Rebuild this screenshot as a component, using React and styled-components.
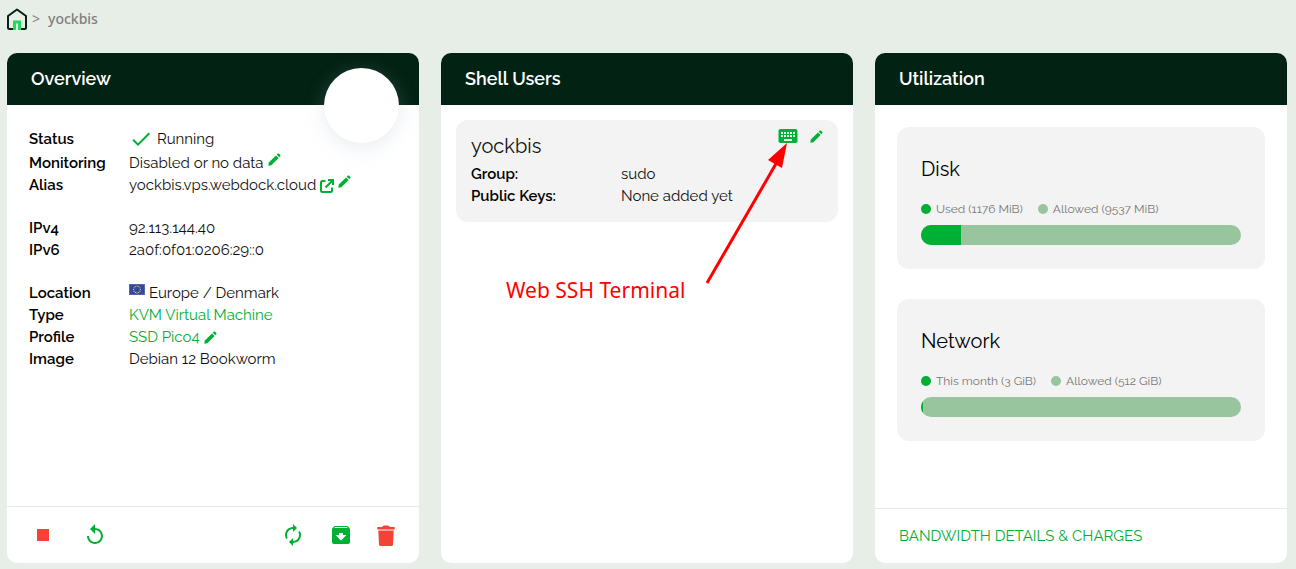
import React from "react";
import styled, { createGlobalStyle } from "styled-components";
import { MdArchive, MdAutorenew, MdCheck, MdReplay, MdStop } from "react-icons/md";

const GREEN = "#00b035";
const RED = "#f44336";

const GlobalStyle = createGlobalStyle`
  * { box-sizing: border-box; }
  body {
    margin: 0;
    background: #e7eee7;
    color: #111;
    font-family: Raleway, Lato, "Open Sans", sans-serif;
    font-size: 15px;
    line-height: 22px;
  }
`;

const Page = styled.div`
  min-height: 100vh;
  display: flex;
  flex-direction: column;
  padding: 8px 9px 6px 7px;
`;

const Breadcrumb = styled.nav`
  display: flex;
  align-items: center;
  height: 22px;
  margin-bottom: 23px;
  color: #808080;
  font-family: "Noto Sans", sans-serif;
  font-size: 14px;
  font-weight: 500;
`;

const HomeLink = styled.a`
  display: flex;
`;

const Separator = styled.span`
  margin: 0 8px 0 4px;
  font-weight: 400;
`;

const Columns = styled.main`
  flex: 1;
  display: grid;
  grid-template-columns: repeat(3, minmax(0, 1fr));
  gap: 22px;
`;

const Card = styled.section`
  position: relative;
  display: flex;
  flex-direction: column;
  background: #fff;
  border-radius: 10px;
`;

const CardHeader = styled.header`
  padding: 15px 24px;
  background: #022213;
  border-radius: 10px 10px 0 0;
`;

const CardTitle = styled.h2`
  margin: 0;
  color: #fff;
  font-size: 18px;
  font-weight: 600;
  line-height: 22px;
`;

const Avatar = styled.div`
  position: absolute;
  top: 15px;
  right: 20px;
  width: 75px;
  height: 75px;
  border-radius: 50%;
  background: #fff;
  box-shadow: 0 4px 20px rgba(160, 180, 205, 0.25);
`;

const CardBody = styled.div`
  flex: 1;
  padding: ${(p) => p.$padding};
`;

const CardFooter = styled.footer`
  display: flex;
  align-items: center;
  height: ${(p) => p.$height};
  padding: 0 24px;
  border-top: 1px solid #e8e8e8;
`;

const Details = styled.dl`
  margin: 0 0 21px;
`;

const DetailRow = styled.div`
  display: grid;
  grid-template-columns: ${(p) => p.$label || "100px"} 1fr;
  align-items: center;
  height: ${(p) => (p.$tall ? "27px" : "22px")};
`;

const Label = styled.dt`
  color: #000;
  font-weight: 600;
`;

const Value = styled.dd`
  display: flex;
  align-items: center;
  gap: 4px;
  margin: 0;
`;

const TextLink = styled.a`
  color: ${GREEN};
  text-decoration: none;
`;

const IconButton = styled.button`
  display: flex;
  margin: 0;
  padding: 0;
  border: 0;
  background: none;
  color: ${(p) => (p.$danger ? RED : GREEN)};
  font-size: 24px;
  cursor: pointer;
`;

const EditButton = styled(IconButton)`
  padding-bottom: ${(p) => (p.$raised ? "8px" : "0")};
`;

const IconLink = styled.a`
  display: flex;
  color: ${GREEN};
`;

const CheckIcon = styled(MdCheck)`
  color: ${GREEN};
  font-size: 24px;
`;

const ActionGroup = styled.div`
  display: flex;
  gap: ${(p) => p.$gap};
  margin-left: ${(p) => (p.$end ? "auto" : "0")};
`;

const UserCard = styled.article`
  padding: 15px;
  border-radius: 12px;
  background: #f3f3f3;
`;

const UserHeader = styled.div`
  display: flex;
  justify-content: space-between;
  align-items: flex-start;
  height: 28px;
`;

const UserName = styled.h3`
  margin: 0;
  font-size: 20px;
  font-weight: 400;
`;

const UserActions = styled.div`
  display: flex;
  align-items: center;
  gap: 12px;
  margin-top: -6px;
`;

const UserDetails = styled.dl`
  margin: 0;
`;

const AnnotationText = styled.p`
  position: absolute;
  top: 223px;
  left: 65px;
  margin: 0;
  color: #f00;
  font-family: "Noto Sans", sans-serif;
  font-size: 21px;
  line-height: 28px;
`;

const AnnotationArrow = styled.svg`
  position: absolute;
  top: 87px;
  right: 60px;
  pointer-events: none;
`;

const Meter = styled.section`
  padding: 24px;
  border-radius: 12px;
  background: #f3f3f3;

  & + & {
    margin-top: 30px;
  }
`;

const MeterTitle = styled.h3`
  margin: 0 0 12px;
  color: #000;
  font-size: 20px;
  font-weight: 400;
  line-height: 36px;
`;

const Legend = styled.div`
  display: flex;
  gap: 15px;
  margin-bottom: 6px;
  color: #777;
  font-size: 12px;
  line-height: 20px;
`;

const LegendItem = styled.span`
  display: flex;
  align-items: center;
  gap: 5px;

  &::before {
    content: "";
    width: 10px;
    height: 10px;
    border-radius: 50%;
    background: ${(p) => (p.$used ? GREEN : "#98c49e")};
  }
`;

const Bar = styled.div`
  height: 20px;
  overflow: hidden;
  border-radius: 10px;
  background: #98c49e;
`;

const BarFill = styled.div`
  height: 100%;
  background: ${GREEN};
`;

function HomeIcon() {
  return (
    <svg width="21" height="22" viewBox="0 0 21 22" fill="none" aria-hidden="true">
      <path
        d="M7 21H2.5Q1 21 1 19.500V8L10 1.500L19 8V19.500Q19 21 17.500 21H13"
        stroke="#022213"
        strokeWidth="2"
        strokeLinejoin="round"
      />
      <path d="M7.500 22V14H12.500V22" stroke="#1fdb57" strokeWidth="3" />
    </svg>
  );
}

function EuFlag() {
  const stars = Array.from({ length: 12 }, (_, i) => {
    const angle = (i * Math.PI) / 6;
    return [8 + 3.4 * Math.sin(angle), 5.5 - 3.4 * Math.cos(angle)];
  });
  return (
    <svg width="16" height="18" viewBox="0 0 16 18" role="img" aria-label="European Union">
      <rect width="16" height="11" fill="#35469c" />
      <rect x="0.5" y="0.5" width="15" height="10" fill="none" stroke="#5965ad" />
      {stars.map(([x, y]) => (
        <circle key={`${x}-${y}`} cx={x} cy={y} r="0.6" fill="#e4d75c" />
      ))}
    </svg>
  );
}

function PencilIcon() {
  return (
    <svg width="13" height="13" viewBox="0 0 13 13" fill="currentColor" aria-hidden="true">
      <path d="M0.300 12.700L0.800 9.600L8 2.400L10.600 5L3.400 12.200Z" />
      <path d="M8.700 1.700L9.900 0.600Q10.400 0.200 10.900 0.600L12.400 2.100Q12.800 2.600 12.400 3.100L11.300 4.300Z" />
    </svg>
  );
}

function OpenIcon() {
  return (
    <svg
      width="14"
      height="18"
      viewBox="0 0 14 18"
      fill="none"
      stroke="currentColor"
      strokeWidth="2"
      aria-hidden="true"
    >
      <path d="M5.500 5H2.500Q1 5 1 6.500V14.500Q1 16 2.500 16H10.500Q12 16 12 14.500V11.500" />
      <path d="M8 4H13V9M13 4L5.500 11.500" />
    </svg>
  );
}

function KeyboardIcon() {
  const columns = [3, 6, 9, 12, 15];
  return (
    <svg width="20" height="14" viewBox="0 0 20 14" aria-hidden="true">
      <rect x="0.5" width="19" height="14" rx="2" fill="currentColor" />
      <g fill="#f3f3f3">
        {columns.map((x) => (
          <React.Fragment key={x}>
            <rect x={x} y="3" width="2" height="2" />
            <rect x={x} y="6" width="2" height="2" />
          </React.Fragment>
        ))}
        <rect x="6" y="10" width="8" height="2" />
      </g>
    </svg>
  );
}

function TrashIcon() {
  return (
    <svg width="18" height="24" viewBox="0 0 18 24" fill="currentColor" aria-hidden="true">
      <path d="M0.300 4H5Q6 2.500 7 2.500H11Q12 2.500 13 4H17.700V6.500H0.300Z" />
      <path d="M1.300 7.500H16.700L16 21.500Q15.900 23 14.400 23H3.600Q2.100 23 2 21.500Z" />
    </svg>
  );
}

function Edit({ label, raised }) {
  return (
    <EditButton type="button" aria-label={label} $raised={raised}>
      <PencilIcon />
    </EditButton>
  );
}

function Row({ label, children, tall, width }) {
  return (
    <DetailRow $tall={tall} $label={width}>
      <Label>{label}</Label>
      <Value>{children}</Value>
    </DetailRow>
  );
}

function Usage({ title, used, allowed, percent }) {
  return (
    <Meter>
      <MeterTitle>{title}</MeterTitle>
      <Legend>
        <LegendItem $used>{used}</LegendItem>
        <LegendItem>{allowed}</LegendItem>
      </Legend>
      <Bar>
        <BarFill style={{ width: `${percent}%` }} />
      </Bar>
    </Meter>
  );
}

export default function App() {
  return (
    <>
      <GlobalStyle />
      <Page>
        <Breadcrumb aria-label="Breadcrumb">
          <HomeLink href="#" aria-label="Home">
            <HomeIcon />
          </HomeLink>
          <Separator>&gt;</Separator>
          <span>yockbis</span>
        </Breadcrumb>
        <Columns>
          <Card>
            <CardHeader>
              <CardTitle>Overview</CardTitle>
            </CardHeader>
            <Avatar />
            <CardBody $padding="20px 22px 0">
              <Details>
                <Row label="Status" tall>
                  <CheckIcon />
                  Running
                </Row>
                <Row label="Monitoring">
                  Disabled or no data
                  <Edit label="Edit monitoring" raised />
                </Row>
                <Row label="Alias">
                  yockbis.vps.webdock.cloud
                  <IconLink href="#" aria-label="Open site">
                    <OpenIcon />
                  </IconLink>
                  <Edit label="Edit alias" raised />
                </Row>
              </Details>
              <Details>
                <Row label="IPv4">92.113.144.40</Row>
                <Row label="IPv6">2a0f:0f01:0206:29::0</Row>
              </Details>
              <Details>
                <Row label="Location">
                  <EuFlag />
                  Europe / Denmark
                </Row>
                <Row label="Type">
                  <TextLink href="#">KVM Virtual Machine</TextLink>
                </Row>
                <Row label="Profile">
                  <TextLink href="#">SSD Pico4</TextLink>
                  <Edit label="Edit profile" />
                </Row>
                <Row label="Image">Debian 12 Bookworm</Row>
              </Details>
            </CardBody>
            <CardFooter $height="57px">
              <ActionGroup $gap="28px">
                <IconButton type="button" aria-label="Stop" $danger>
                  <MdStop />
                </IconButton>
                <IconButton type="button" aria-label="Restart">
                  <MdReplay />
                </IconButton>
              </ActionGroup>
              <ActionGroup $gap="24px" $end>
                <IconButton type="button" aria-label="Reinstall">
                  <MdAutorenew />
                </IconButton>
                <IconButton type="button" aria-label="Archive">
                  <MdArchive />
                </IconButton>
                <IconButton type="button" aria-label="Delete" $danger>
                  <TrashIcon />
                </IconButton>
              </ActionGroup>
            </CardFooter>
          </Card>

          <Card>
            <CardHeader>
              <CardTitle>Shell Users</CardTitle>
            </CardHeader>
            <CardBody $padding="15px">
              <UserCard>
                <UserHeader>
                  <UserName>yockbis</UserName>
                  <UserActions>
                    <IconButton type="button" aria-label="Web SSH terminal">
                      <KeyboardIcon />
                    </IconButton>
                    <Edit label="Edit user" />
                  </UserActions>
                </UserHeader>
                <UserDetails>
                  <Row label="Group:" width="150px">
                    sudo
                  </Row>
                  <Row label="Public Keys:" width="150px">
                    None added yet
                  </Row>
                </UserDetails>
              </UserCard>
            </CardBody>
            <AnnotationText>Web SSH Terminal</AnnotationText>
            <AnnotationArrow width="90" height="146" viewBox="0 0 90 146" aria-hidden="true">
              <path d="M4 143L74 22" stroke="#f00" strokeWidth="3" />
              <path d="M84 3L65 20L79 28Z" fill="#f00" />
            </AnnotationArrow>
          </Card>

          <Card>
            <CardHeader>
              <CardTitle>Utilization</CardTitle>
            </CardHeader>
            <CardBody $padding="22px">
              <Usage
                title="Disk"
                used="Used (1176 MiB)"
                allowed="Allowed (9537 MiB)"
                percent={12.5}
              />
              <Usage
                title="Network"
                used="This month (3 GiB)"
                allowed="Allowed (512 GiB)"
                percent={0.6}
              />
            </CardBody>
            <CardFooter $height="55px">
              <TextLink href="#">BANDWIDTH DETAILS &amp; CHARGES</TextLink>
            </CardFooter>
          </Card>
        </Columns>
      </Page>
    </>
  );
}
